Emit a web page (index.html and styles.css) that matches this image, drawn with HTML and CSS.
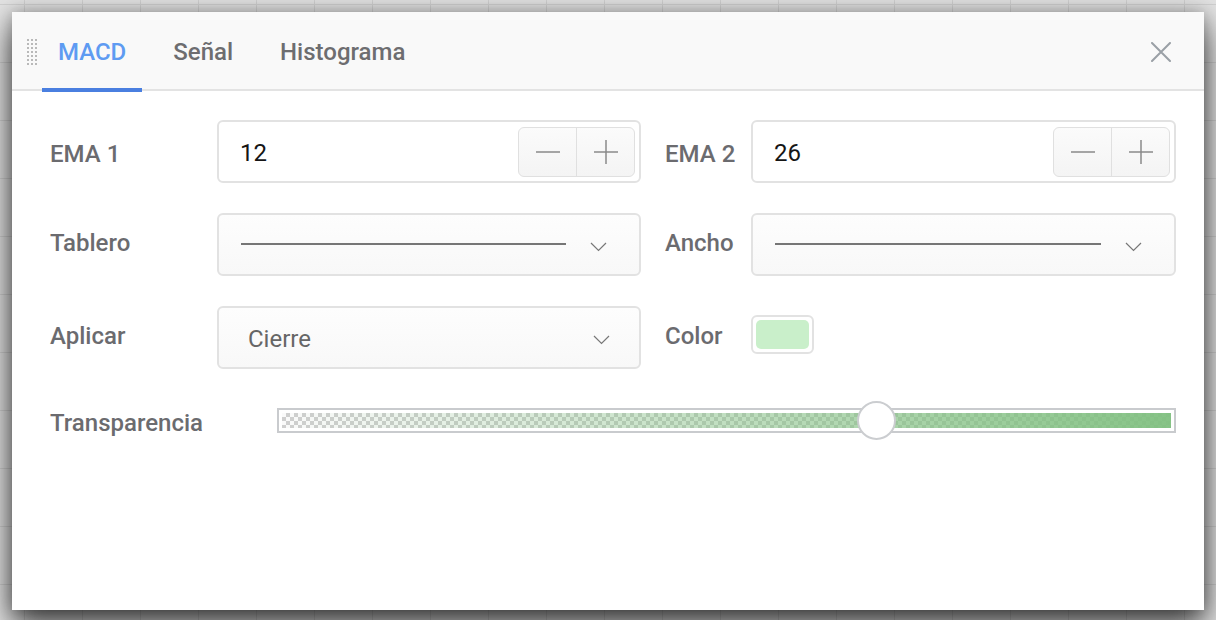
FILE: index.html
```html
<!DOCTYPE html>
<html lang="es">
<head>
<meta charset="utf-8">
<title>MACD</title>
<link rel="stylesheet" href="styles.css">
</head>
<body>
<div class="backdrop">
  <div class="dialog">
    <div class="header">
      <div class="handle"></div>
      <div class="tabs">
        <div class="tab active">MACD</div>
        <div class="tab">Señal</div>
        <div class="tab">Histograma</div>
      </div>
      <div class="close">
        <svg width="20" height="20" viewBox="0 0 20 20"><path d="M1 1 L19 19 M19 1 L1 19" stroke="#9aa0a6" stroke-width="2" stroke-linecap="round" fill="none"/></svg>
      </div>
    </div>
    <div class="body">
      <div class="grid">
        <div class="label low">EMA 1</div>
        <div class="box num">
          <span class="value">12</span>
          <div class="stepper">
            <div class="step"><svg width="26" height="26" viewBox="0 0 26 26"><path d="M1 13 H25" stroke="#8a8a8a" stroke-width="1.5"/></svg></div>
            <div class="step"><svg width="26" height="26" viewBox="0 0 26 26"><path d="M1 13 H25 M13 1 V25" stroke="#8a8a8a" stroke-width="1.5"/></svg></div>
          </div>
        </div>
        <div class="label right low">EMA 2</div>
        <div class="box num">
          <span class="value">26</span>
          <div class="stepper">
            <div class="step"><svg width="26" height="26" viewBox="0 0 26 26"><path d="M1 13 H25" stroke="#8a8a8a" stroke-width="1.5"/></svg></div>
            <div class="step"><svg width="26" height="26" viewBox="0 0 26 26"><path d="M1 13 H25 M13 1 V25" stroke="#8a8a8a" stroke-width="1.5"/></svg></div>
          </div>
        </div>

        <div class="label">Tablero</div>
        <div class="box select">
          <div class="line"></div>
          <svg class="chev" width="17" height="10" viewBox="0 0 17 10"><path d="M1 1 L8.5 8.5 L16 1" stroke="#777" stroke-width="1.2" fill="none"/></svg>
        </div>
        <div class="label right">Ancho</div>
        <div class="box select">
          <div class="line"></div>
          <svg class="chev" width="17" height="10" viewBox="0 0 17 10"><path d="M1 1 L8.5 8.5 L16 1" stroke="#777" stroke-width="1.2" fill="none"/></svg>
        </div>

        <div class="label">Aplicar</div>
        <div class="box select text">
          <span class="sel-text">Cierre</span>
          <svg class="chev" width="17" height="10" viewBox="0 0 17 10"><path d="M1 1 L8.5 8.5 L16 1" stroke="#777" stroke-width="1.2" fill="none"/></svg>
        </div>
        <div class="label right">Color</div>
        <div class="swatch-cell">
          <div class="swatch"><div class="swatch-fill"></div></div>
        </div>
      </div>
      <div class="slider-row">
        <div class="label wide low">Transparencia</div>
        <div class="slider">
          <div class="track"><div class="fill"></div></div>
          <div class="thumb" style="left: 66.7%"></div>
        </div>
      </div>
    </div>
  </div>
</div>
</body>
</html>
```
FILE: styles.css
```css
* { box-sizing: border-box; }
html, body { margin: 0; padding: 0; }
body {
  width: 1216px;
  height: 620px;
  overflow: hidden;
  font-family: Roboto, "Liberation Sans", Arial, sans-serif;
  background-color: #e2e2e2;
  background-image:
    linear-gradient(to right, #d0d0d0 1px, transparent 1px),
    linear-gradient(to bottom, #d0d0d0 1px, transparent 1px);
  background-size: 58px 58px;
  background-position: 24px 4px;
}
.backdrop {
  padding: 12px 12px 10px 12px;
  height: 620px;
}
.dialog {
  width: 1192px;
  height: 598px;
  background: #fff;
  box-shadow: 0 16px 30px rgba(0,0,0,0.7), 0 0 16px rgba(0,0,0,0.28);
  display: flex;
  flex-direction: column;
}
.header {
  height: 79px;
  background: #f9f9f9;
  border-bottom: 2px solid #e3e3e3;
  display: flex;
  align-items: stretch;
  flex: none;
}
.handle {
  width: 11px;
  height: 27px;
  margin: 26px 0 0 14px;
  background-image: radial-gradient(circle, #b9b9b9 0.9px, transparent 1.2px);
  background-size: 4px 4px;
  background-position: 0 0;
}
.tabs {
  display: flex;
  margin-left: 5px;
  gap: 15px;
}
.tab {
  position: relative;
  padding: 2px 16px 0;
  display: flex;
  align-items: center;
  font-size: 24px;
  font-weight: 500;
  color: #6d6d70;
}
.tab.active { color: #5e9bf2; }
.tab.active::after {
  content: "";
  position: absolute;
  left: 0;
  right: 0;
  bottom: -3px;
  height: 4px;
  background: #4a7fe0;
}
.close {
  margin-left: auto;
  margin-right: 33px;
  display: flex;
  align-items: center;
  padding-top: 2px;
}
.body {
  padding: 29px 28px 0 38px;
}
.grid {
  display: grid;
  grid-template-columns: 167px 424px 110px 425px;
  grid-auto-rows: 63px;
  row-gap: 30px;
  align-items: center;
}
.label {
  font-size: 24px;
  font-weight: 500;
  color: #6b6b6f;
  padding-bottom: 4px;
}
.label.low { padding-bottom: 0; padding-top: 4px; }
.label.right { padding-left: 24px; }
.box {
  height: 63px;
  border: 2px solid #e2e2e2;
  border-radius: 6px;
  display: flex;
  align-items: center;
}
.box.num {
  background: #fff;
  padding: 0 4px 0 21px;
}
.value {
  font-size: 24px;
  color: #151515;
  flex: 1;
  padding-top: 2px;
}
.stepper {
  display: flex;
  width: 117px;
  height: 50px;
  border: 1.5px solid #e0e0e0;
  border-radius: 6px;
  background: linear-gradient(#fbfbfb, #f4f4f4);
}
.step {
  flex: 1;
  display: flex;
  align-items: center;
  justify-content: center;
}
.step + .step { border-left: 1.5px solid #e0e0e0; }
.box.select {
  background: linear-gradient(#fdfdfd, #f8f8f8);
  padding: 0 32px 0 22px;
}
.line {
  flex: 1;
  height: 2px;
  background: #767676;
  margin-right: 24px;
  margin-top: -2px;
}
.chev { flex: none; margin-top: 4px; }
.box.select.text { padding: 0 29px 0 29px; }
.sel-text {
  flex: 1;
  font-size: 24px;
  color: #666;
  margin-top: 3px;
}
.swatch-cell { display: flex; align-items: center; }
.swatch {
  width: 63px;
  height: 39px;
  border: 2px solid #e2e2e2;
  border-radius: 6px;
  padding: 3px;
  background: #fff;
  margin-top: -6px;
}
.swatch-fill {
  width: 100%;
  height: 100%;
  background: #c9efca;
  border-radius: 5px;
}
.slider-row {
  display: flex;
  align-items: center;
  margin-top: 39px;
  height: 25px;
}
.label.wide {
  width: 227px;
  flex: none;
}
.slider {
  position: relative;
  flex: 1;
  height: 25px;
}
.track {
  height: 25px;
  border: 2px solid #c9cbce;
  padding: 3px;
  background: #fff;
}
.fill {
  height: 100%;
  background:
    linear-gradient(to right, rgba(128,192,128,0), rgba(128,192,128,0.95)),
    repeating-conic-gradient(#cfcfcf 0 25%, #fafafa 0 50%) 0 0 / 8px 8px;
}
.thumb {
  position: absolute;
  top: 50%;
  width: 39px;
  height: 39px;
  margin: -19.5px 0 0 -19.5px;
  border-radius: 50%;
  background: #fff;
  border: 2px solid #cbcdd0;
}
```
